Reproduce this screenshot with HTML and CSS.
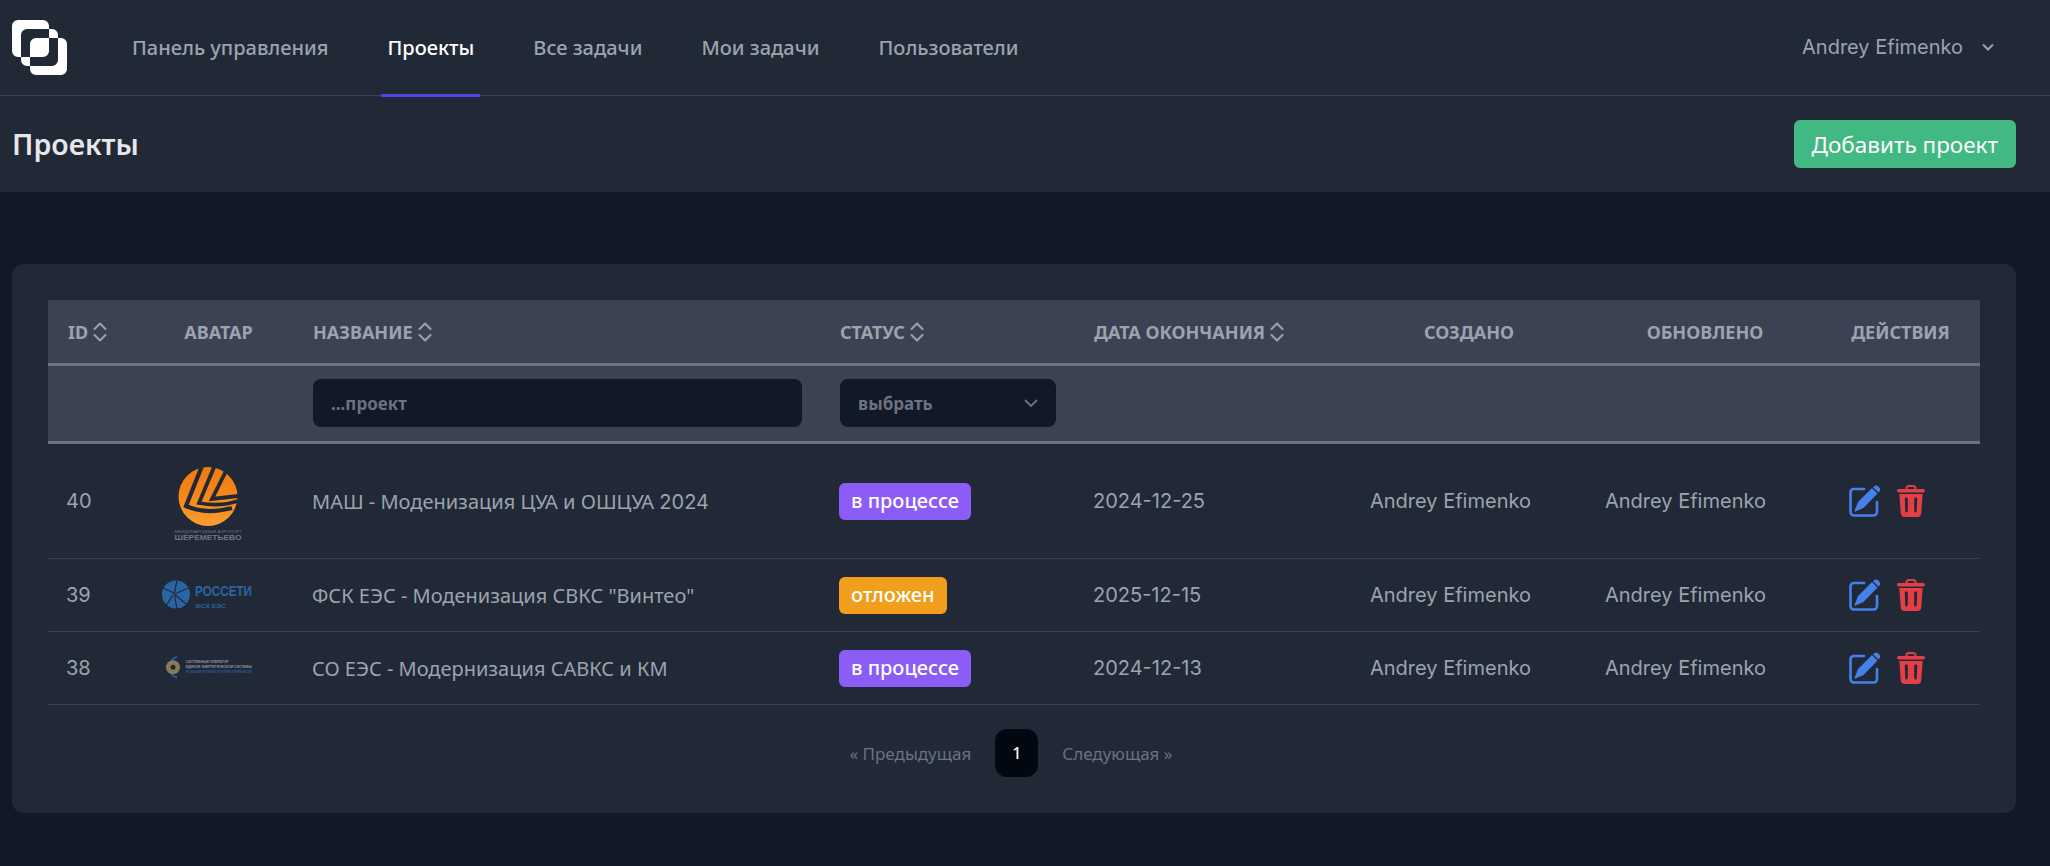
FILE: index.html
```html
<!DOCTYPE html>
<html lang="ru">
<head>
<meta charset="utf-8">
<title>Проекты</title>
<link rel="stylesheet" href="styles.css">
</head>
<body>
<svg class="defs" width="0" height="0" aria-hidden="true">
  <defs>
    <symbol id="sort" viewBox="0 0 14 22"><path d="M1.5 8 7 2.500 12.500 8M1.500 14 7 19.500 12.500 14" fill="none" stroke="currentColor" stroke-width="2" stroke-linecap="round" stroke-linejoin="round"/></symbol>
    <symbol id="edit" viewBox="0 0 32 32"><path d="M15 4H5a3.500 3.500 0 0 0-3.500 3.500v19.500A3.500 3.500 0 0 0 5 30.500h19.500A3.500 3.500 0 0 0 28 27V17" fill="none" stroke="currentColor" stroke-width="2.600" stroke-linecap="round"/><path d="M9 17 23 3l5.500 5.500-14 14.500L6.500 26.500a.6.6 0 0 1-.9-.8z" fill="currentColor"/><path d="M25 1.500a3 3 0 0 1 4-.3l1.500 1.500a3 3 0 0 1-.3 4L29.500 7.500 24 2.200z" fill="currentColor"/></symbol>
    <symbol id="trash" viewBox="0 0 28 32"><path fill="currentColor" fill-rule="evenodd" d="M8.500 4V3.500A3.500 3.500 0 0 1 12 0h4a3.500 3.500 0 0 1 3.500 3.500V4h6.800c.9 0 1.700.8 1.700 1.500S27.300 7.500 26.500 7.500H1.500C.7 7.500 0 6.300 0 5.500S.8 4 1.700 4zM10.500 4h7v-.5c0-.8-.7-1.500-1.500-1.500h-4c-.8 0-1.500.7-1.500 1.500zM2.300 9h23.400l-1.500 19.500A3.800 3.800 0 0 1 20.400 32H7.600a3.800 3.800 0 0 1-3.800-3.500zM9 12.500c-.8 0-1.200.5-1.200 1.200l.5 12.600c0 .8.500 1.200 1.200 1.200s1.300-.5 1.300-1.200V13.700c0-.7-.9-1.200-1.800-1.200zM19 12.500c-.9 0-1.800.5-1.800 1.200v12.600c0 .7.600 1.200 1.300 1.200s1.200-.4 1.200-1.200l.5-12.600c0-.7-.4-1.200-1.200-1.200z"/></symbol>
  </defs>
</svg>

<header class="topbar">
  <nav class="nav">
    <svg class="logo" viewBox="0 0 55 55" aria-label="logo"><path fill="#fff" fill-rule="evenodd" d="M6 0h25a6 6 0 0 1 6 6v25a6 6 0 0 1-6 6H6a6 6 0 0 1-6-6V6a6 6 0 0 1 6-6zM15 9h25a6 6 0 0 1 6 6v25a6 6 0 0 1-6 6H15a6 6 0 0 1-6-6V15a6 6 0 0 1 6-6zM24 18h25a6 6 0 0 1 6 6v25a6 6 0 0 1-6 6H24a6 6 0 0 1-6-6V24a6 6 0 0 1 6-6z"/></svg>
    <ul class="menu">
      <li><a class="tab">Панель управления</a></li>
      <li><a class="tab tab-active">Проекты</a></li>
      <li><a class="tab">Все задачи</a></li>
      <li><a class="tab">Мои задачи</a></li>
      <li><a class="tab">Пользователи</a></li>
    </ul>
    <div class="user"><span class="latin">Andrey Efimenko</span><svg class="user-chevron" viewBox="0 0 12 8"><path d="M1 1.500 6 6.500l5-5" fill="none" stroke="currentColor" stroke-width="2"/></svg></div>
  </nav>
  <div class="pagehead">
    <h1 class="title">Проекты</h1>
    <button class="add">Добавить проект</button>
  </div>
</header>

<main class="main">
  <section class="card">
    <table class="table">
      <colgroup>
        <col class="c-id"><col class="c-avatar"><col class="c-name"><col class="c-status"><col class="c-date"><col class="c-created"><col class="c-updated"><col class="c-actions">
      </colgroup>
      <thead>
        <tr class="head">
          <th class="th-id"><span class="sortable">ID<svg class="sort"><use href="#sort"/></svg></span></th>
          <th class="center">АВАТАР</th>
          <th><span class="sortable">НАЗВАНИЕ<svg class="sort"><use href="#sort"/></svg></span></th>
          <th><span class="sortable">СТАТУС<svg class="sort"><use href="#sort"/></svg></span></th>
          <th><span class="sortable">ДАТА ОКОНЧАНИЯ<svg class="sort"><use href="#sort"/></svg></span></th>
          <th class="center th-created">СОЗДАНО</th>
          <th class="center">ОБНОВЛЕНО</th>
          <th class="center">ДЕЙСТВИЯ</th>
        </tr>
        <tr class="filters">
          <th></th><th></th>
          <th><input class="field" placeholder="...проект"></th>
          <th><div class="field select"><span>выбрать</span><svg class="select-chevron" viewBox="0 0 14 8"><path d="M1 1l6 6 6-6" fill="none" stroke="currentColor" stroke-width="1.800"/></svg></div></th>
          <th></th><th></th><th></th><th></th>
        </tr>
      </thead>
      <tbody>
        <tr class="row">
          <td class="td-id latin">40</td>
          <td class="td-avatar">
            <svg class="av av-sh" viewBox="0 0 76 78">
              <defs><linearGradient id="og" x1="0" y1="0" x2="0" y2="1"><stop offset="0" stop-color="#ee7a12"/><stop offset=".6" stop-color="#f98a1c"/><stop offset="1" stop-color="#fb9c34"/></linearGradient></defs>
              <circle cx="38" cy="33.500" r="29.500" fill="url(#og)"/>
              <g fill="none" stroke="#212937">
                <path d="M32 3 16 43Q35 52 62 45" stroke-width="4.200"/>
                <path d="M44.500 3 29 40Q50 44 68 38" stroke-width="3.800"/>
                <path d="M56 8 42 36 68 33" stroke-width="3.800"/>
              </g>
              <text class="av-tiny" x="4.500" y="70" textLength="67" lengthAdjust="spacingAndGlyphs">МЕЖДУНАРОДНЫЙ АЭРОПОРТ</text>
              <text class="av-name" x="4.500" y="76.500" textLength="67" lengthAdjust="spacingAndGlyphs">ШЕРЕМЕТЬЕВО</text>
            </svg>
          </td>
          <td>МАШ - Моденизация ЦУА и ОШЦУА <span class="latin">2024</span></td>
          <td><span class="badge violet">в процессе</span></td>
          <td class="latin">2024-12-25</td>
          <td class="latin by">Andrey Efimenko</td>
          <td class="latin by">Andrey Efimenko</td>
          <td class="actions"><svg class="ic-edit"><use href="#edit"/></svg><svg class="ic-trash"><use href="#trash"/></svg></td>
        </tr>
        <tr class="row">
          <td class="td-id latin">39</td>
          <td class="td-avatar">
            <svg class="av av-wide" viewBox="0 0 100 32">
              <circle cx="18" cy="15.500" r="14" fill="#2a64a3"/>
              <path d="M19 2 16 15.500M16 14 5 9M17 15 30 9M15 16 8 27M16.500 16 19 30M17.500 16 28 25" stroke="#212937" stroke-width="1.200"/>
              <text class="av-ros" transform="translate(37 16.500) scale(1 1.350)" textLength="57" lengthAdjust="spacingAndGlyphs">РОССЕТИ</text>
              <text class="av-fsk" x="37" y="28.500" textLength="31" lengthAdjust="spacingAndGlyphs">ФСК ЕЭС</text>
            </svg>
          </td>
          <td>ФСК ЕЭС - Моденизация СВКС "Винтео"</td>
          <td><span class="badge amber">отложен</span></td>
          <td class="latin">2025-12-15</td>
          <td class="latin by">Andrey Efimenko</td>
          <td class="latin by">Andrey Efimenko</td>
          <td class="actions"><svg class="ic-edit"><use href="#edit"/></svg><svg class="ic-trash"><use href="#trash"/></svg></td>
        </tr>
        <tr class="row">
          <td class="td-id latin">38</td>
          <td class="td-avatar">
            <svg class="av av-wide" viewBox="0 0 100 32">
              <path d="M19 4.800A11 11 0 0 0 19 25.800" fill="none" stroke="#245a9a" stroke-width="2"/>
              <circle cx="15" cy="15.300" r="7" fill="#8a7a5c"/>
              <circle cx="15" cy="15.300" r="2.500" fill="#212937"/>
              <text class="av-so" x="27.700" y="11.300" textLength="43" lengthAdjust="spacingAndGlyphs">СИСТЕМНЫЙ ОПЕРАТОР</text>
              <text class="av-so" x="27.700" y="16.300" textLength="66" lengthAdjust="spacingAndGlyphs">ЕДИНОЙ ЭНЕРГЕТИЧЕСКОЙ СИСТЕМЫ</text>
              <text class="av-so av-so-blue" x="27.700" y="21.300" textLength="66" lengthAdjust="spacingAndGlyphs">RUSSIAN POWER SYSTEM OPERATOR</text>
            </svg>
          </td>
          <td>СО ЕЭС - Модернизация САВКС и КМ</td>
          <td><span class="badge violet">в процессе</span></td>
          <td class="latin">2024-12-13</td>
          <td class="latin by">Andrey Efimenko</td>
          <td class="latin by">Andrey Efimenko</td>
          <td class="actions"><svg class="ic-edit"><use href="#edit"/></svg><svg class="ic-trash"><use href="#trash"/></svg></td>
        </tr>
      </tbody>
    </table>
    <div class="pager">
      <a class="pg-link">« Предыдущая</a>
      <a class="pg-num">1</a>
      <a class="pg-link">Следующая »</a>
    </div>
  </section>
</main>
</body>
</html>
```
FILE: styles.css
```css
* { box-sizing: border-box; }
html, body { margin: 0; height: 100%; }
body {
  background: #111827;
  color: #9ca3af;
  font-family: "Noto Sans", "Open Sans", sans-serif;
  font-size: 20px;
  overflow: hidden;
}
.defs { position: absolute; }
.latin { font-family: "Inter", "Noto Sans", sans-serif; }

.topbar { background: #212937; }
.nav {
  height: 96px;
  display: flex;
  align-items: flex-start;
  border-bottom: 1px solid #3a4150;
  padding: 0 56px 0 12px;
}
.logo { width: 55px; height: 55px; margin-top: 20px; flex: none; }
.menu {
  list-style: none;
  display: flex;
  gap: 47px;
  margin: 0 0 0 59px;
  padding: 0;
}
.tab {
  display: block;
  height: 97px;
  padding: 33px 6px 0;
  line-height: 30px;
  font-size: 20px;
  font-weight: 500;
  color: #9ca3af;
  border-bottom: 3px solid transparent;
}
.tab-active { color: #fff; border-bottom-color: #4f46e5; }
.user {
  margin-left: auto;
  height: 94px;
  display: flex;
  align-items: center;
  gap: 19px;
  font-size: 20px;
  color: #9ca3af;
}
.user-chevron { width: 12px; height: 8px; color: #9ca3af; }

.pagehead {
  height: 96px;
  display: flex;
  align-items: center;
  justify-content: space-between;
  padding: 0 34px 0 12px;
}
.title { margin: 0; font-size: 28.500px; font-weight: 600; color: #e5e7eb; }
.add {
  height: 48px;
  padding: 0 18px;
  border: 0;
  border-radius: 6px;
  background: #42b883;
  color: #fff;
  font: 400 22.500px "Noto Sans", sans-serif;
}

.main { padding: 72px 34px 0 12px; }
.card {
  background: #212937;
  border-radius: 12px;
  padding: 36px 36px 36px 36px;
}
.table {
  width: 100%;
  table-layout: fixed;
  border-collapse: separate;
  border-spacing: 0;
}
.c-id { width: 92px; }
.c-avatar { width: 157px; }
.c-name { width: 527px; }
.c-status { width: 254px; }
.c-date { width: 276px; }
.c-created { width: 235px; }
.c-updated { width: 232px; }

.head th, .filters th { background: #3c4251; text-align: left; font-weight: 700; }
.head th {
  height: 66px;
  padding: 0 16px;
  border-bottom: 3px solid #6b7280;
  font-size: 18px;
  color: #9ca3af;
}
.head .th-id { padding-left: 20px; }
.head th.center { text-align: center; }
.head .th-created { padding-right: 21px; }
.sortable { display: inline-flex; align-items: center; gap: 5px; }
.sort { width: 14px; height: 22px; }
.filters th {
  height: 78px;
  padding: 0 0 1px 16px;
  border-bottom: 3px solid #6b7280;
}
.field {
  display: block;
  height: 48px;
  border: 0;
  border-radius: 8px;
  background: #111827;
  padding: 0 18px;
  color: #6b7280;
  font: 700 17px "Noto Sans", sans-serif;
  outline: 0;
}
.field::placeholder { color: #6b7280; opacity: 1; }
input.field { width: 489px; }
.select {
  width: 216px;
  display: flex;
  align-items: center;
  justify-content: space-between;
  padding-right: 18px;
}
.select-chevron { width: 14px; height: 8px; color: #6b7280; }

.row td {
  padding: 0 0 0 15px;
  border-bottom: 1px solid #3a4150;
  height: 73px;
  color: #9ca3af;
  font-size: 20px;
}
.row:first-child td { height: 115px; }
.row .td-id { padding-left: 18px; }
.row .td-avatar { padding: 0 0 0 18px; }
.row .by { padding-left: 16px; }
.av { display: block; }
.av-sh { width: 76px; height: 78px; margin: 2px 0 0 12px; }
.av-wide { width: 100px; height: 32px; }
.av-tiny { font: 3px "Liberation Sans", sans-serif; fill: #6b7280; }
.av-name { font: 700 7px "Liberation Sans", sans-serif; fill: #6f7685; }
.av-ros { font: 700 10.500px "Liberation Sans", sans-serif; fill: #2a64a3; }
.av-fsk { font: 700 6px "Liberation Sans", sans-serif; fill: #2a64a3; }
.av-so { font: 700 3.100px "Liberation Sans", sans-serif; fill: #8f95a0; }
.av-so-blue { fill: #245a9a; }

.badge {
  display: inline-block;
  height: 37px;
  line-height: 36px;
  padding: 0 12px;
  border-radius: 6px;
  color: #fff;
  font-weight: 500;
}
.violet { background: #8b5cf6; }
.amber { background: #f09e1b; }

.row .actions { padding-left: 28px; white-space: nowrap; }
.ic-edit { width: 32px; height: 32px; color: #4680ea; vertical-align: middle; margin-right: 16px; }
.ic-trash { width: 28px; height: 32px; color: #e53e47; vertical-align: middle; }

.pager {
  display: flex;
  justify-content: center;
  align-items: center;
  margin-top: 24px;
  padding-right: 6px;
  gap: 24px;
}
.pg-link { font-size: 17px; color: #6b7280; }
.pg-num {
  width: 43px;
  height: 48px;
  line-height: 48px;
  text-align: center;
  border-radius: 12px;
  background: #030712;
  color: #fdf8e4;
  font-size: 16px;
  font-weight: 500;
}
```
